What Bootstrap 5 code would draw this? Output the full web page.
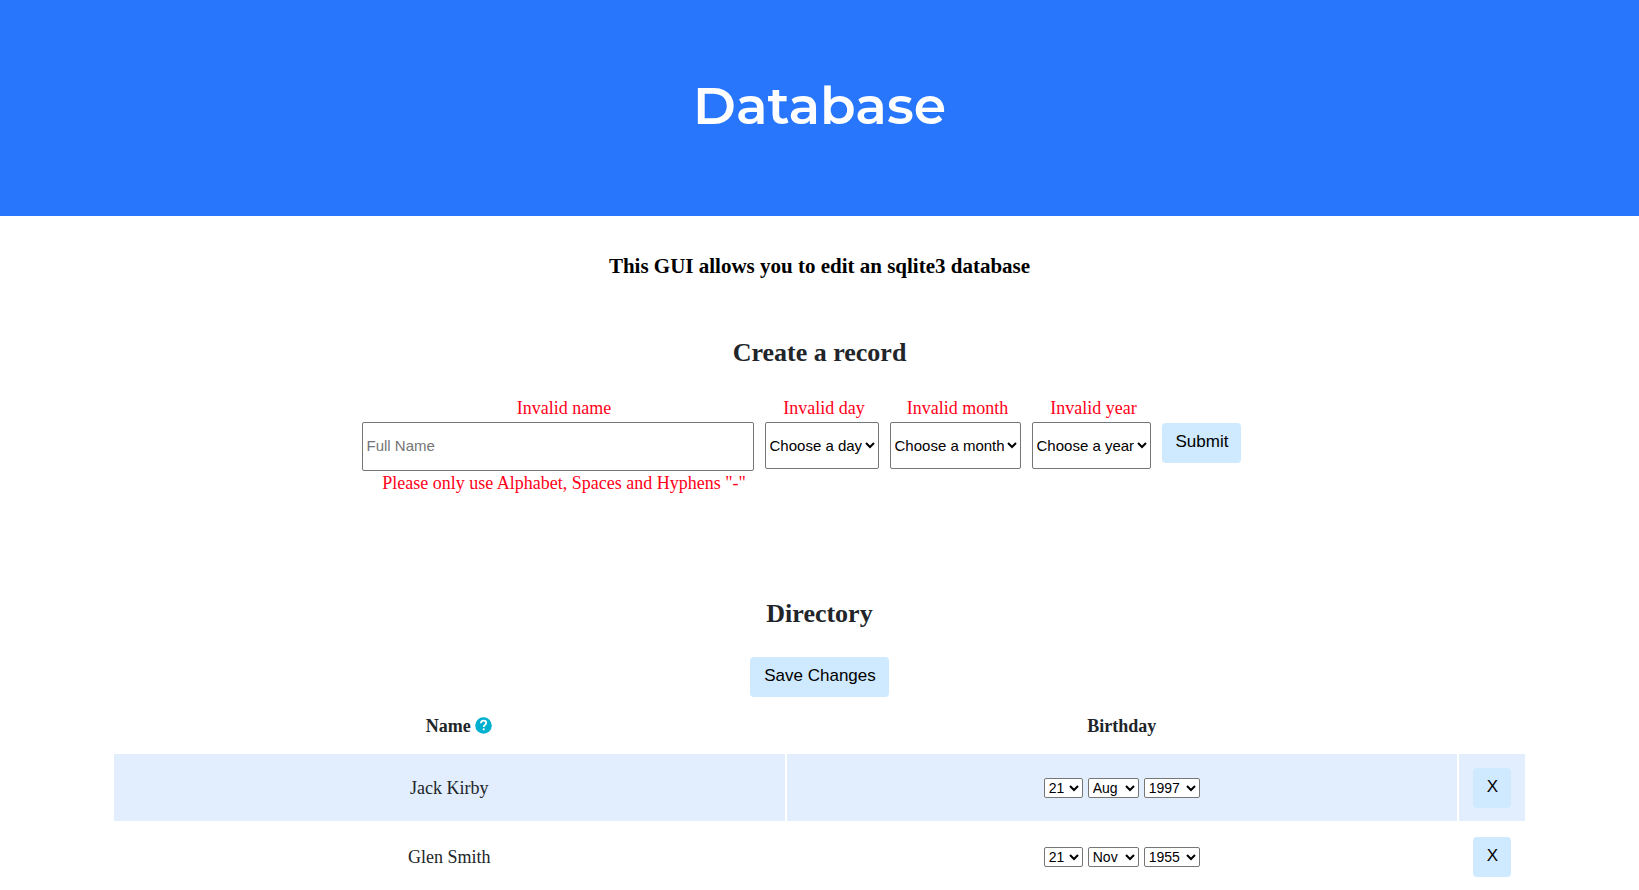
<!DOCTYPE html>
<html lang="en">
<head>
<meta charset="utf-8">
<meta name="viewport" content="width=device-width, initial-scale=1">
<title>Database</title>
<link href="https://cdn.jsdelivr.net/npm/bootstrap@5.3.0/dist/css/bootstrap.min.css" rel="stylesheet">
<style>
body { font-family: "Liberation Serif", "Times New Roman", serif; font-size: 18px; line-height: 20px; color: #212529; }
.banner { background: #2776fb; height: 216px; padding-bottom: 4px; }
.banner h1 { font: 600 52px/64px Montserrat, Inter, sans-serif; }
.intro { font-size: 21px; line-height: 24px; font-weight: 700; color: #000; padding-top: 38px; margin-bottom: 59px; }
.section-title { font-size: 26px; line-height: 32px; font-weight: 700; }
.record-form { gap: 11px; padding: 29px 36px 105px 0; }
.name-field { width: 392px; }
.error-text { color: #ff0018; display: block; margin-bottom: 4px; padding-left: 5px; }
.name-field .error-text { padding-left: 13px; }
.name-field input, .record-form select { font: 15px "Liberation Sans", Arial, sans-serif; background: #fff; border: 1px solid #767676; border-radius: 2px; color: #000; }
.name-field input { height: 49px; padding: 0 4px 2px; }
.name-field input::placeholder { color: #757575; }
.name-field .hint-text { margin: 2px 0 0; }
.record-form select { height: 47px; }
.day-select { width: 114px; }
.month-select { width: 131px; }
.year-select { width: 119px; }
.action-btn { --bs-btn-border-radius: 4px; --bs-btn-bg: #cfeafe; --bs-btn-hover-bg: #b8dffb; --bs-btn-color: #000; --bs-btn-border-width: 0; font: 17px/20px "Liberation Sans", Arial, sans-serif; height: 40px; padding: 9px 13px 11px 14px; }
.submit-btn { margin-top: 25px; }
.save-row { padding-top: 27px; }
.directory { padding: 0 112px; }
.directory table { border-collapse: separate; border-spacing: 2px; table-layout: fixed; }
.directory th { height: 53px; }
.directory tbody td { height: 67px; }
.directory th:first-child { padding-left: 20px; }
.remove-col { width: 66px; }
.directory tbody tr:nth-child(odd) td { background: #e2eefd; }
.date-group { gap: 5px; }
.date-group select { font: 14px "Liberation Sans", Arial, sans-serif; height: 20px; background: #fff; border: 1px solid #767676; border-radius: 2px; color: #000; }
.date-group .dd { width: 39px; }
.date-group .mm { width: 51px; }
.date-group .yy { width: 56px; }
</style>
</head>
<body>
<header class="banner d-flex align-items-center justify-content-center text-white">
  <h1 class="m-0">Database</h1>
</header>
<main class="text-center">
  <p class="intro">This GUI allows you to edit an sqlite3 database</p>
  <section>
    <h2 class="section-title m-0">Create a record</h2>
    <form class="record-form d-flex justify-content-center align-items-start">
      <div class="name-field">
        <label class="error-text" for="name">Invalid name</label>
        <input class="w-100 d-block" id="name" type="text" placeholder="Full Name">
        <span class="error-text hint-text">Please only use Alphabet, Spaces and Hyphens "-"</span>
      </div>
      <div>
        <label class="error-text" for="day">Invalid day</label>
        <select class="day-select d-block" id="day"><option>Choose a day</option></select>
      </div>
      <div>
        <label class="error-text" for="month">Invalid month</label>
        <select class="month-select d-block" id="month"><option>Choose a month</option></select>
      </div>
      <div>
        <label class="error-text" for="year">Invalid year</label>
        <select class="year-select d-block" id="year"><option>Choose a year</option></select>
      </div>
      <button class="btn action-btn submit-btn" type="submit">Submit</button>
    </form>
  </section>
  <section class="directory">
    <h2 class="section-title m-0">Directory</h2>
    <div class="save-row"><button class="btn action-btn d-block mx-auto" type="button">Save Changes</button></div>
    <table class="w-100">
      <colgroup><col><col><col class="remove-col"></colgroup>
      <thead>
        <tr>
          <th class="text-center" scope="col"><span class="d-inline-flex align-items-center gap-1">Name
            <svg width="17" height="17" viewBox="0 0 17 17" role="img" aria-label="Help"><circle cx="8.500" cy="8.500" r="8.300" fill="#00b0cf"/><path d="M5.900 6.200C6 4.600 7.100 3.700 8.600 3.700s2.600.9 2.600 2.300c0 1.900-2.500 1.900-2.500 4" fill="none" stroke="#fff" stroke-width="1.800"/><circle cx="8.700" cy="12.300" r="1.100" fill="#fff"/></svg></span></th>
          <th class="text-center" scope="col">Birthday</th>
          <td></td>
        </tr>
      </thead>
      <tbody>
        <tr>
          <td>Jack Kirby</td>
          <td><div class="date-group d-flex justify-content-center">
            <select class="dd" aria-label="Day"><option>21</option></select>
            <select class="mm" aria-label="Month"><option>Aug</option></select>
            <select class="yy" aria-label="Year"><option>1997</option></select>
          </div></td>
          <td><button class="btn action-btn" type="button">X</button></td>
        </tr>
        <tr>
          <td>Glen Smith</td>
          <td><div class="date-group d-flex justify-content-center">
            <select class="dd" aria-label="Day"><option>21</option></select>
            <select class="mm" aria-label="Month"><option>Nov</option></select>
            <select class="yy" aria-label="Year"><option>1955</option></select>
          </div></td>
          <td><button class="btn action-btn" type="button">X</button></td>
        </tr>
      </tbody>
    </table>
  </section>
</main>
<script src="https://cdn.jsdelivr.net/npm/bootstrap@5.3.0/dist/js/bootstrap.bundle.min.js"></script>
</body>
</html>
